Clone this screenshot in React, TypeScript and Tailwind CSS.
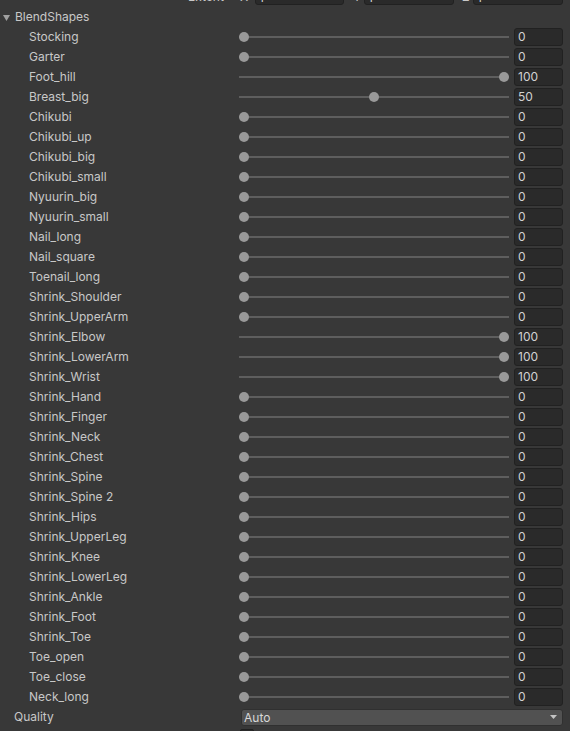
import React from "react";

const shapes: [string, number][] = [
  ["Stocking", 0],
  ["Garter", 0],
  ["Foot_hill", 100],
  ["Breast_big", 50],
  ["Chikubi", 0],
  ["Chikubi_up", 0],
  ["Chikubi_big", 0],
  ["Chikubi_small", 0],
  ["Nyuurin_big", 0],
  ["Nyuurin_small", 0],
  ["Nail_long", 0],
  ["Nail_square", 0],
  ["Toenail_long", 0],
  ["Shrink_Shoulder", 0],
  ["Shrink_UpperArm", 0],
  ["Shrink_Elbow", 100],
  ["Shrink_LowerArm", 100],
  ["Shrink_Wrist", 100],
  ["Shrink_Hand", 0],
  ["Shrink_Finger", 0],
  ["Shrink_Neck", 0],
  ["Shrink_Chest", 0],
  ["Shrink_Spine", 0],
  ["Shrink_Spine 2", 0],
  ["Shrink_Hips", 0],
  ["Shrink_UpperLeg", 0],
  ["Shrink_Knee", 0],
  ["Shrink_LowerLeg", 0],
  ["Shrink_Ankle", 0],
  ["Shrink_Foot", 0],
  ["Shrink_Toe", 0],
  ["Toe_open", 0],
  ["Toe_close", 0],
  ["Neck_long", 0],
];

function SliderRow({ name, value }: { name: string; value: number }) {
  return (
    <div className="flex h-5 items-center">
      <div className="w-[239px] shrink-0 truncate pl-[29px] leading-5 text-[#c8c8c8]">{name}</div>
      <div className="relative h-5 w-[270px] shrink-0">
        <div className="absolute left-0 right-0 top-[9px] h-[2px] bg-[#5e5e5e]" />
        <div
          className="absolute top-[5px] h-[10px] w-[10px] rounded-full bg-[#999999]"
          style={{ left: `${value * 2.6}px` }}
        />
      </div>
      <div className="ml-[5px] h-[18px] w-[49px] shrink-0 rounded-[3px] border border-[#212121] bg-[#2a2a2a] pl-[3px] text-[12px] leading-[16px] text-[#d2d2d2]">
        {value}
      </div>
    </div>
  );
}

function VecField({ w }: { w: string }) {
  return (
    <div className={`h-[18px] shrink-0 rounded-[3px] border border-[#212121] bg-[#2a2a2a] ${w}`}>
      <span className="relative top-[1px] pl-[3px] text-[12px] leading-[16px] text-[#d2d2d2]">1</span>
    </div>
  );
}

export default function App() {
  return (
    <div className="h-[731px] w-[570px] overflow-hidden bg-[#383838] font-['Inter','Noto_Sans',sans-serif] text-[12px] text-[#c8c8c8]">
      {/* partially visible Extent row */}
      <div className="-mt-[13px] flex h-5 items-start">
        <div className="w-[239px] shrink-0 pl-[188px] leading-[20px]">Extent</div>
        <div className="w-[16px] shrink-0 pl-[1px] leading-[20px]">X</div>
        <VecField w="w-[89px]" />
        <div className="ml-[4px] w-[16px] shrink-0 pl-[5px] leading-[20px]">Y</div>
        <VecField w="w-[90px]" />
        <div className="ml-[3px] w-[16px] shrink-0 pl-[5px] leading-[20px]">Z</div>
        <VecField w="w-[90px]" />
      </div>

      {/* BlendShapes foldout header */}
      <div className="flex h-5 items-center">
        <svg width="7" height="6" viewBox="0 0 7 6" className="ml-[3px] mr-[5px] mt-[1px]">
          <polygon points="0,0 7,0 3.5,6" fill="#a0a0a0" />
        </svg>
        <span className="leading-5 text-[#c8c8c8]">BlendShapes</span>
      </div>

      {shapes.map(([n, v]) => (
        <SliderRow key={n} name={n} value={v} />
      ))}

      {/* Quality */}
      <div className="flex h-5 items-center">
        <div className="w-[241px] shrink-0 pl-[14px] leading-5">Quality</div>
        <div className="flex h-[17px] w-[322px] shrink-0 items-center justify-between rounded-[3px] border border-[#303030] bg-[#515151] pl-[2px] pr-[5px]">
          <span className="leading-[15px] text-[#d8d8d8]">Auto</span>
          <svg width="7" height="4" viewBox="0 0 7 4">
            <polygon points="0,0 7,0 3.5,4" fill="#c4c4c4" />
          </svg>
        </div>
      </div>

      {/* next row: checkbox */}
      <div className="flex h-5 items-start">
        <div className="w-[240px] shrink-0" />
        <div className="mt-[2px] h-[14px] w-[14px] rounded-[2px] border border-[#212121] bg-[#2a2a2a]" />
      </div>
    </div>
  );
}
